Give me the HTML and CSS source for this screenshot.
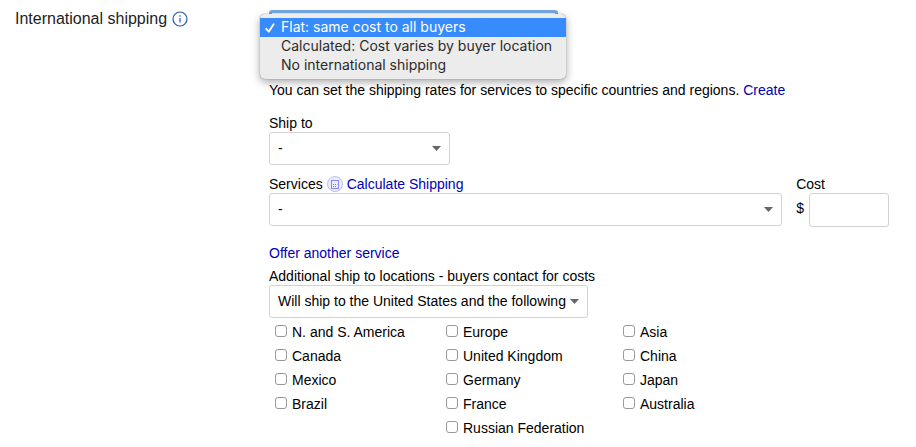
FILE: index.html
```
<!DOCTYPE html>
<html lang="en">
<head>
<meta charset="utf-8">
<title>International shipping</title>
<link rel="stylesheet" href="styles.css">
</head>
<body>
<form class="shipping">
  <div class="heading">
    <label for="intl">International shipping</label>
    <button type="button" class="info" aria-label="Help">
      <svg width="16" height="16" viewBox="0 0 16 16" fill="none" stroke="#2257b5">
        <circle cx="8" cy="8" r="7" stroke-width="1.2"/>
        <path d="M8 7v4.500M8 4.300v1.400" stroke-width="1.200"/>
      </svg>
    </button>
  </div>

  <div class="content">
    <div class="picker">
      <select id="intl" class="select picker-select">
        <option>Flat: same cost to all buyers</option>
        <option>Calculated: Cost varies by buyer location</option>
        <option>No international shipping</option>
      </select>
      <ul class="menu" role="listbox" aria-label="International shipping">
        <li class="menu-item selected" role="option" aria-selected="true">
          <svg class="check" width="10" height="10" viewBox="0 0 10 10" fill="none" stroke="currentColor" stroke-width="1.800" stroke-linecap="round" stroke-linejoin="round"><path d="M1.200 5.800L3.800 8.700L8.600 1.200"/></svg>
          Flat: same cost to all buyers
        </li>
        <li class="menu-item" role="option" aria-selected="false">Calculated: Cost varies by buyer location</li>
        <li class="menu-item" role="option" aria-selected="false">No international shipping</li>
      </ul>
    </div>

    <p class="note">You can set the shipping rates for services to specific countries and regions. <a href="#create">Create</a></p>

    <div class="field">
      <label for="ship-to">Ship to</label>
      <select id="ship-to" class="select ship-to"><option>-</option></select>
    </div>

    <div class="service-row">
      <div class="field service">
        <div class="label-line">
          <label for="service">Services</label>
          <a class="calculate" href="#calculate">
            <svg width="16" height="16" viewBox="0 0 16 16" fill="none">
              <circle cx="8" cy="8" r="7.500" fill="#ececff" stroke="#bcbcfa"/>
              <rect x="4.500" y="4.500" width="7" height="8" stroke="#8a8af0"/>
              <path d="M6 8.500h1M8 8.500h1M10 8.500h.5M6 10.500h1M8 10.500h1" stroke="#7676e8"/>
            </svg>
            Calculate Shipping</a>
        </div>
        <select id="service" class="select"><option>-</option></select>
      </div>
      <div class="field">
        <label for="cost">Cost</label>
        <div class="money"><span>$</span><input id="cost" class="cost" type="text"></div>
      </div>
    </div>

    <a class="offer" href="#offer">Offer another service</a>

    <div class="field">
      <label for="locations">Additional ship to locations - buyers contact for costs</label>
      <select id="locations" class="select locations"><option>Will ship to the United States and the following</option></select>
    </div>

    <div class="regions" role="group" aria-label="Ship to locations">
      <div class="region-column">
        <label class="region"><input type="checkbox">N. and S. America</label>
        <label class="region"><input type="checkbox">Canada</label>
        <label class="region"><input type="checkbox">Mexico</label>
        <label class="region"><input type="checkbox">Brazil</label>
      </div>
      <div class="region-column">
        <label class="region"><input type="checkbox">Europe</label>
        <label class="region"><input type="checkbox">United Kingdom</label>
        <label class="region"><input type="checkbox">Germany</label>
        <label class="region"><input type="checkbox">France</label>
        <label class="region"><input type="checkbox">Russian Federation</label>
      </div>
      <div class="region-column">
        <label class="region"><input type="checkbox">Asia</label>
        <label class="region"><input type="checkbox">China</label>
        <label class="region"><input type="checkbox">Japan</label>
        <label class="region"><input type="checkbox">Australia</label>
      </div>
    </div>
  </div>
</form>
</body>
</html>
```
FILE: styles.css
```
* {
  box-sizing: border-box;
}

body {
  margin: 0;
  background: #fff;
  color: #000;
  font: 14px/18px "Liberation Sans", Arial, sans-serif;
}

a {
  color: #0000b8;
  text-decoration: none;
}

.shipping {
  display: grid;
  grid-template-columns: 254px 1fr;
  padding: 10px 27px 7px 15px;
}

.heading {
  display: flex;
  align-items: center;
  align-self: start;
  gap: 5px;
  color: #222;
  font-size: 16px;
}

.info {
  display: flex;
  padding: 0;
  border: 0;
  background: none;
}

.field {
  display: flex;
  flex-direction: column;
  align-items: flex-start;
}

.select {
  appearance: none;
  width: 100%;
  height: 33px;
  padding: 0 20px 2px 8px;
  border: 1px solid #d2d2d2;
  border-radius: 3px;
  background: #fff url("data:image/svg+xml,%3Csvg xmlns='http://www.w3.org/2000/svg' width='9' height='5'%3E%3Cpath d='M0 0h9L4.500 5z' fill='%23666'/%3E%3C/svg%3E") no-repeat right 8px center;
  color: #000;
  font: inherit;
}

.picker {
  position: relative;
  height: 71px;
}

.picker-select {
  width: 289px;
  border: 3px solid #74aaea;
}

.menu {
  position: absolute;
  top: 4px;
  left: -9px;
  width: 306px;
  margin: 0;
  padding: 4px 0;
  border-radius: 5px;
  background: #ececec;
  box-shadow: 0 0 1px rgba(0, 0, 0, 0.5), 0 3px 9px rgba(0, 0, 0, 0.35);
  color: #2b2b2b;
  font: 14px/17px Inter, sans-serif;
  list-style: none;
}

.menu-item {
  position: relative;
  padding: 0 0 2px 21px;
}

.selected {
  background: #378bfd;
  color: #fff;
}

.check {
  position: absolute;
  top: 5px;
  left: 5px;
}

.note {
  margin: 0 0 15px;
}

.ship-to {
  width: 181px;
}

.service-row {
  display: flex;
  gap: 14px;
  margin: 10px 0 17px;
}

.service {
  flex: 1;
}

.label-line,
.calculate {
  display: flex;
  align-items: center;
  gap: 4px;
}

.money {
  display: flex;
  gap: 5px;
  line-height: 30px;
}

.cost {
  width: 80px;
  height: 34px;
  padding: 0 8px;
  border: 1px solid #d2d2d2;
  border-radius: 3px;
  font: inherit;
}

.offer {
  display: block;
  width: max-content;
  margin-bottom: 5px;
}

.locations {
  width: 319px;
}

.regions {
  display: grid;
  grid-template-columns: 171px 177px 1fr;
  padding: 2px 0 0 6px;
}

.region {
  display: flex;
  align-items: center;
  gap: 5px;
  width: max-content;
  height: 24px;
}

.region input {
  appearance: none;
  width: 12px;
  height: 12px;
  margin: 0 0 2px;
  border: 1px solid #999;
  border-radius: 3px;
  background: #fff;
}
```
